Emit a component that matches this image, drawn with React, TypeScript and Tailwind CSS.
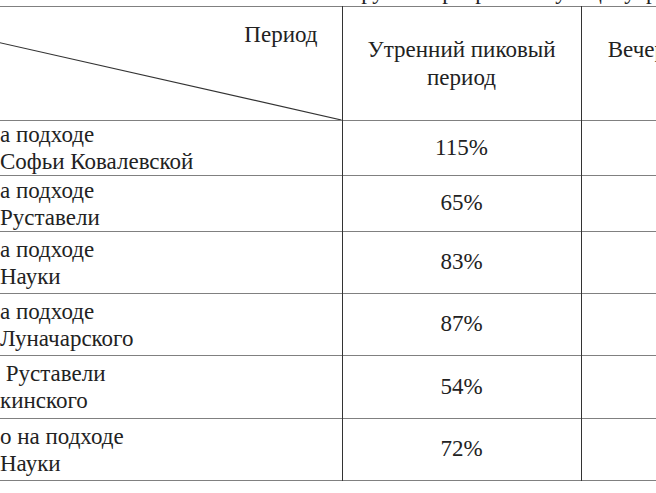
const rows = [
  { a: ["Загрузка н", "а подходе"], b: ["к ул. ", "Софьи Ковалевской"], am: "115%", pm: "98%", h: "h-[55px]" },
  { a: ["Загрузка н", "а подходе"], b: ["к ул. ", "Руставели"], am: "65%", pm: "71%", h: "h-[56px]" },
  { a: ["Загрузка н", "а подходе"], b: ["к пр. ", "Науки"], am: "83%", pm: "90%", h: "h-[62px]" },
  { a: ["Загрузка н", "а подходе"], b: ["к пр. ", "Луначарского"], am: "87%", pm: "94%", h: "h-[62px]" },
  { a: ["Участок ул.", " Руставели"], b: ["от ул. Лу", "кинского"], am: "54%", pm: "60%", h: "h-[63px]" },
  { a: ["Загружен", "о на подходе"], b: ["к пр. ", "Науки"], am: "72%", pm: "79%", h: "h-[62px]" },
];

function Line({ parts }: { parts: string[] }) {
  return (
    <div className="flex whitespace-pre">
      <span className="w-[158px] shrink-0 overflow-hidden text-right">{parts[0]}</span>
      <span>{parts[1]}</span>
    </div>
  );
}

export default function App() {
  return (
    <div className="h-[493px] w-[656px] overflow-hidden bg-white font-[family-name:'Liberation_Serif',serif] text-[23px] text-[#222]">
      <div className="h-[6px] overflow-hidden">
        <p className="-mt-[21px] whitespace-nowrap pl-[330px] leading-[26px]">
          Загрузка перекрёстков улиц в утренний и вечерний пиковые периоды
        </p>
      </div>
      <table className="-ml-[158px] w-[978px] min-w-[978px] table-fixed border-collapse">
        <colgroup>
          <col className="w-[500px]" />
          <col className="w-[239px]" />
          <col className="w-[239px]" />
        </colgroup>
        <thead>
          <tr className="h-[114px] border-y border-[#808080]">
            <th className="relative p-0 align-top font-normal">
              <svg className="absolute inset-0 h-full w-full" viewBox="0 0 500 114" preserveAspectRatio="none">
                <line x1="0" y1="0" x2="500" y2="114" stroke="#333" strokeWidth="1.2" />
              </svg>
              <div className="pr-[24px] pt-[14px] text-right leading-[28px]">Период</div>
            </th>
            <th className="border-x border-[#333] px-2 text-center font-normal leading-[28px]">
              Утренний пиковый
              <br />
              период
            </th>
            <th className="border-x border-[#333] px-2 text-center font-normal leading-[28px]">
              Вечерний пиковый
              <br />
              период
            </th>
          </tr>
        </thead>
        <tbody>
          {rows.map((r, i) => (
            <tr key={i} className={`${r.h} border-b border-[#808080]`}>
              <td className="p-0 align-middle leading-[27px]">
                <Line parts={r.a} />
                <Line parts={r.b} />
              </td>
              <td className="border-x border-[#333] text-center align-middle">{r.am}</td>
              <td className="border-x border-[#333] text-center align-middle">{r.pm}</td>
            </tr>
          ))}
        </tbody>
      </table>
    </div>
  );
}
